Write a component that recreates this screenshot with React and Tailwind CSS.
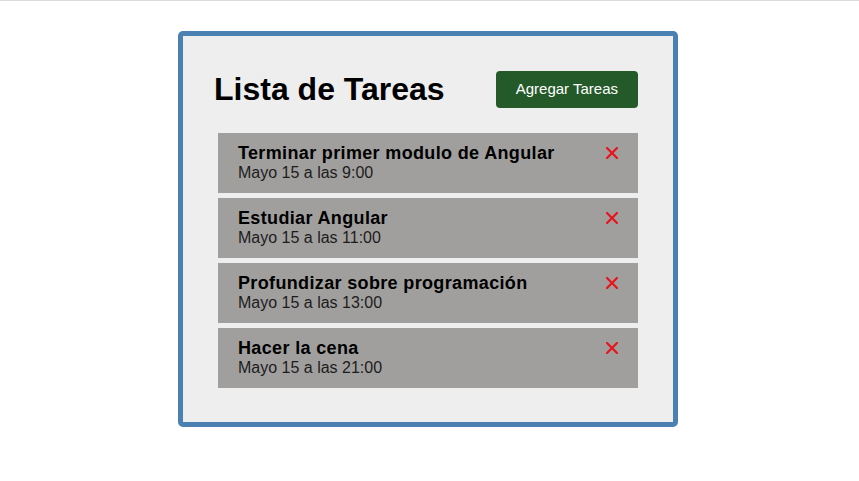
import React from "react";

const tareas = [
  { titulo: "Terminar primer modulo de Angular", fecha: "Mayo 15 a las 9:00" },
  { titulo: "Estudiar Angular", fecha: "Mayo 15 a las 11:00" },
  { titulo: "Profundizar sobre programación", fecha: "Mayo 15 a las 13:00" },
  { titulo: "Hacer la cena", fecha: "Mayo 15 a las 21:00" },
];

function Cruz() {
  return (
    <svg width="12" height="12" viewBox="0 0 12 12" className="shrink-0 mt-[4px]">
      <path d="M1 1 L11 11 M11 1 L1 11" stroke="#e8141c" strokeWidth="2.2" strokeLinecap="square" />
    </svg>
  );
}

export default function App() {
  return (
    <div className="min-h-[481px] bg-white border-t border-[#dcdcdc] pt-[30px] font-['Liberation_Sans',Arial,sans-serif]">
      <div className="ml-[178px] w-[500px] bg-[#eeeeee] border-[5px] border-[#4a80b2] rounded-[5px] px-[35px] pt-[35px] pb-[34px]">
        <div className="flex items-center justify-between ml-[-4px] mb-[25px]">
          <h1 className="text-[32px] font-bold text-black leading-[37px]">Lista de Tareas</h1>
          <button className="h-[37px] px-[20px] bg-[#245a29] text-white text-[15px] rounded-[4px]">Agregar Tareas</button>
        </div>
        <div className="flex flex-col gap-[5px]">
          {tareas.map((t, i) => (
            <div key={i} className="h-[60px] bg-[#a19f9e] flex justify-between items-start px-[20px] pt-[10px]">
              <div>
                <p className="text-[18px] leading-[20px] font-bold text-black tracking-[0.35px]">{t.titulo}</p>
                <p className="text-[16px] leading-[20px] text-[#1c1c1c]">{t.fecha}</p>
              </div>
              <Cruz />
            </div>
          ))}
        </div>
      </div>
    </div>
  );
}
